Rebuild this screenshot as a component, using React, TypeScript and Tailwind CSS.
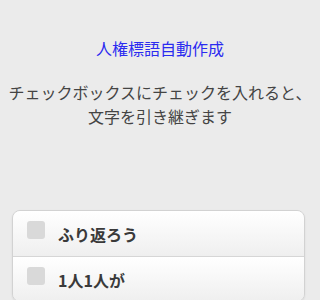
export default function App() {
  const items = ["ふり返ろう", "1人1人が"];
  return (
    <div
      className="min-h-[300px] bg-[#ebebeb] pt-9"
      style={{ fontFamily: '"Noto Sans CJK JP", "Noto Sans", sans-serif' }}
    >
      <h1 className="text-center text-[16px] leading-6 text-[#2b2bf0]">
        人権標語自動作成
      </h1>
      <p className="mt-5 text-center text-[16px] leading-6 text-[#444]">
        チェックボックスにチェックを入れると、
        <br />
        文字を引き継ぎます
      </p>
      <ul className="mx-3 mt-[82px] mr-[15px] overflow-hidden rounded-lg border border-[#d2d2d2] shadow-[0_1px_2px_rgba(0,0,0,0.08)]">
        {items.map((t, i) => (
          <li
            key={t}
            className={
              "flex h-[45px] items-start bg-gradient-to-b from-white to-[#efefef] pl-[14px] pt-[10px] " +
              (i > 0 ? "border-t border-[#d6d6d6]" : "")
            }
          >
            <span className="h-[18px] w-[18px] shrink-0 rounded-[3px] bg-[#d9d9d9]" />
            <span className="ml-[13px] mt-[1px] text-[16px] font-bold leading-6 text-[#3a3a3a]">
              {t}
            </span>
          </li>
        ))}
      </ul>
    </div>
  );
}
